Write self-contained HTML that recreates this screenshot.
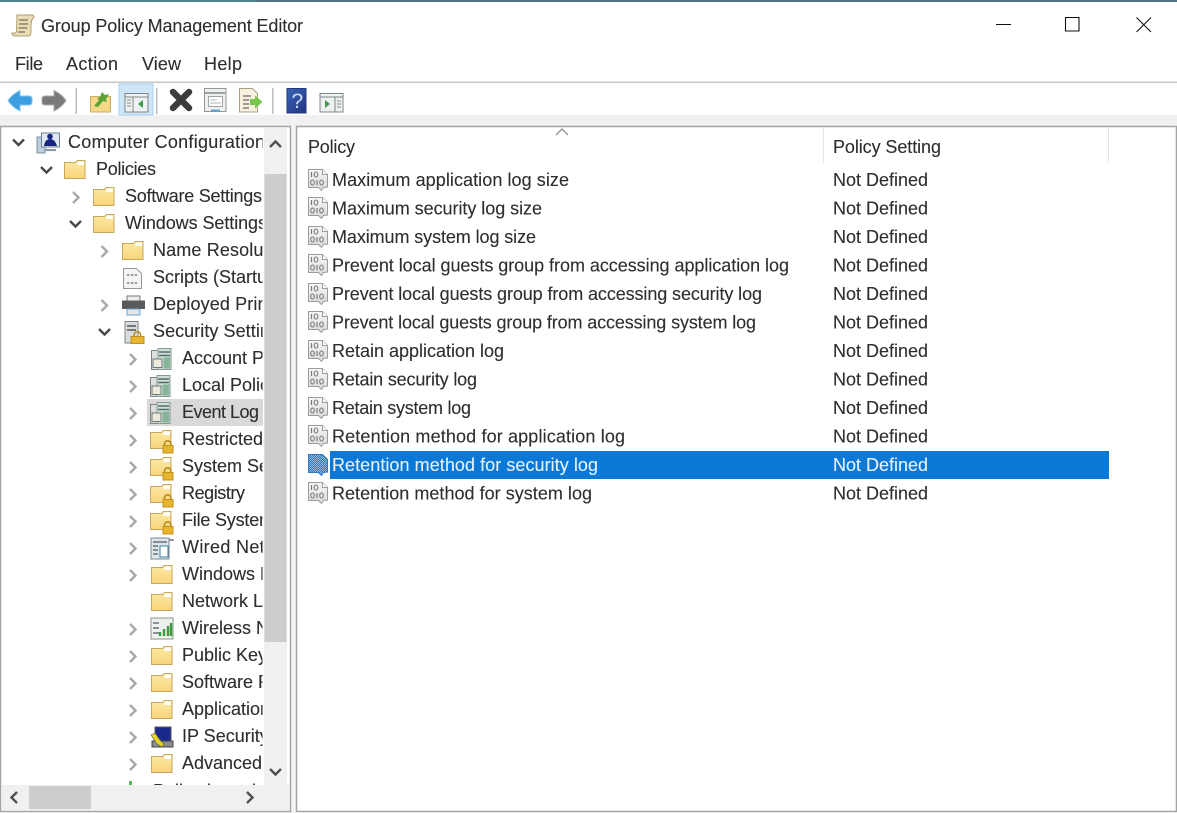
<!DOCTYPE html>
<html><head><meta charset="utf-8"><title>Group Policy Management Editor</title>
<style>html,body{margin:0;padding:0;background:#fff;overflow:hidden}svg{display:block;filter:blur(.3px)}
text{font-family:"Liberation Sans",Arial,sans-serif;font-size:18px;fill:#2e2e2e;stroke:#2e2e2e;stroke-width:.12px}
.g{fill:none;stroke:#a8a8a8;stroke-width:2.400}.d{fill:none;stroke:#484848;stroke-width:2.400}</style></head>
<body>
<svg width="1177" height="813" viewBox="0 0 1177 813" xmlns="http://www.w3.org/2000/svg">
<defs>
<linearGradient id="fg" x1="0" y1="0" x2="0" y2="1"><stop offset="0" stop-color="#fde9a6"/><stop offset="1" stop-color="#f8d47a"/></linearGradient>
<linearGradient id="pgf" x1="0" y1="0" x2="0" y2="1"><stop offset="0" stop-color="#f6f6f6"/><stop offset="1" stop-color="#d9d9d9"/></linearGradient>
<linearGradient id="hb" x1="0" y1="0" x2="1" y2="1"><stop offset="0" stop-color="#3d63b8"/><stop offset="1" stop-color="#20357f"/></linearGradient>
<pattern id="dth" width="2" height="2" patternUnits="userSpaceOnUse"><rect width="2" height="2" fill="#2f78c4"/><rect width="1" height="1" fill="#8fb9e2"/><rect x="1" y="1" width="1" height="1" fill="#8fb9e2"/></pattern>
<clipPath id="tc"><rect x="0" y="128" width="262.500" height="657"/></clipPath>
<g id="fd"><path d="M.5 18.500V2.500h11l2-2h7.500v18z" fill="url(#fg)" stroke="#c6a75e"/><path d="M13.500 1.500h6.500v3.500h-6.500z" fill="#fff"/></g>
<g id="fl"><use href="#fd"/><path d="M14.500 14a3.200 3.200 0 0 1 6.400 0v2h-6.400z" fill="none" stroke="#b98a1c" stroke-width="1.600"/><rect x="13" y="15.500" width="10" height="7.500" fill="#e8b52e" stroke="#c1911f"/></g>
<g id="sv"><rect x=".5" y="2.500" width="9" height="19" fill="#dcdfdf" stroke="#7a8484"/><rect x="7" y=".5" width="13" height="21" fill="#cfe0d8" stroke="#8a9790"/><path d="M8 4h11M8 7.500h11" stroke="#56686a" stroke-width="1.600"/><rect x="2" y="11" width="9" height="8.500" fill="#eeeadb" stroke="#6e7a7a"/><path d="M12.500 9.500h6.500v11h-6.500z" fill="#86b59a"/></g>
<g id="pg"><path d="M.5.5h14l5 5v12.500l-4 .5-2 3-3-3h-10z" fill="url(#pgf)" stroke="#9c9c9c"/><path d="M14.500.5v5h5" fill="#fff" stroke="#9c9c9c"/><path d="M3.500 3v5" stroke="#7c7c7c" stroke-width="1.200"/><ellipse cx="8" cy="5.500" rx="1.800" ry="2.500" fill="none" stroke="#7c7c7c" stroke-width="1.100"/><ellipse cx="4.500" cy="13.500" rx="1.800" ry="2.500" fill="none" stroke="#7c7c7c" stroke-width="1.100"/><path d="M9 11v5" stroke="#7c7c7c" stroke-width="1.200"/><ellipse cx="13.500" cy="13.500" rx="1.800" ry="2.500" fill="none" stroke="#7c7c7c" stroke-width="1.100"/></g>
</defs>

<!-- window chrome -->
<rect width="1177" height="813" fill="#fff"/>
<rect width="256" height="2" fill="#4f8194"/><rect x="256" width="921" height="2" fill="#4e7486"/>
<path d="M17 15h16l1 2q-3 3-3 8v7q0 4-3 4H15q-3 0-3-3 4 1 4.500-2z" fill="#eadcb4" stroke="#ae9d74"/><path d="M19 20h9M19 24h9M18.500 28h9M18 32h7" stroke="#77705c" stroke-width="1.300"/>
<text x="41" y="32" textLength="262">Group Policy Management Editor</text>
<path d="M996 24.500h15M1065.500 17.500h13.500v13.500h-13.500zM1136.500 17.500l14.500 14.500M1151 17.500l-14.500 14.500" fill="none" stroke="#111" stroke-width="1.100"/>
<text x="15" y="70" textLength="28">File</text><text x="66" y="70" textLength="52">Action</text><text x="142" y="70" textLength="39">View</text><text x="204" y="70" textLength="38">Help</text>
<rect y="81.500" width="1177" height="1.600" fill="#c9c9c9"/>
<rect y="115" width="1177" height="11" fill="#f0f0f0"/>

<!-- toolbar -->
<path d="M8 100.500q4-6 12-10v5.500h9q3 0 3 3v3q0 3-3 3h-9v6q-8-4-12-10.500z" fill="#3d9fe0" stroke="#7fc3ee"/>
<path d="M66 100.500q-4-6-12-10v5.500h-9q-3 0-3 3v3q0 3 3 3h9v6q8-4 12-10.500z" fill="#7a7a7a" stroke="#a8a8a8"/>
<rect x="75.500" y="88" width="1.500" height="26" fill="#bdbdbd"/>
<rect x="90.500" y="96.500" width="20" height="15.500" fill="#f6d987" stroke="#c9ad68"/><path d="M94 106l5-6-2-2 3-1 2-5 3 3 4-1-3 5 1 3-4-1-5 6z" fill="#5ea136"/>
<rect x="119" y="84" width="34" height="31" fill="#cfe6f8" stroke="#a8d0f0"/>
<rect x="125" y="93.500" width="23" height="18.500" fill="#eef2f2" stroke="#7d8787"/><path d="M125 97h23M133 97v15" stroke="#7d8787"/><path d="M143 100v8l-5-4z" fill="#3e9c4a"/><path d="M127 100h4M127 103h4M127 106h4" stroke="#888"/>
<rect x="156" y="88" width="1.500" height="26" fill="#bdbdbd"/>
<path d="M173 92l16 16M189 92l-16 16" stroke="#3c3c3c" stroke-width="6.500" stroke-linecap="round"/>
<rect x="204.500" y="88.500" width="21.500" height="23" fill="#f0f0f0" stroke="#8f9797"/><path d="M205 93h21" stroke="#9da5a5" stroke-width="2"/><rect x="208.500" y="96.500" width="14" height="10" fill="#fff" stroke="#9da5a5"/><path d="M210 100h7M210 103h11" stroke="#b0b6b6"/><path d="M211 110.500h9" stroke="#5ba6d8" stroke-width="2"/>
<path d="M239.500 88.500h13l5 5v18.500h-18z" fill="#f6f1de" stroke="#a99f84"/><path d="M243 96h8M243 100h6M243 104h6M243 108h6" stroke="#666" stroke-width="1.300"/><path d="M250 99h5v-3.500l7.500 6.500-7.500 6.500V105h-5z" fill="#79c44b"/>
<rect x="272" y="88" width="1.500" height="26" fill="#bdbdbd"/>
<rect x="287" y="88.500" width="19" height="24.500" fill="url(#hb)" stroke="#22367a"/><text x="291.500" y="108" style="font-size:21px;fill:#c9d8f2;stroke:#c9d8f2">?</text>
<rect x="320" y="93.500" width="23" height="18.500" fill="#eef2f2" stroke="#7d8787"/><path d="M320 97h23M335 97v15" stroke="#7d8787"/><path d="M325 100v8l5-4z" fill="#3e9c4a"/><path d="M337 101h4M337 104h4M337 107h4" stroke="#888"/>

<!-- left pane -->
<rect x="0.500" y="126.500" width="290" height="685" fill="#fff" stroke="#a4a4a4" stroke-width="1.500"/>
<rect x="291.500" y="115" width="4" height="698" fill="#f4f4f4"/>
<rect x="147" y="399" width="116" height="27" fill="#d9d9d9"/>

<!-- tree icons -->
<rect x="37" y="137" width="8" height="16" fill="#bcd0dd" stroke="#7b8f9c"/><rect x="41.500" y="133" width="18" height="14" fill="#dfe8f0" stroke="#70808c"/><circle cx="50" cy="136.500" r="2.800" fill="#16267e"/><path d="M44 146q1-7 6-7t7 7z" fill="#16267e"/><path d="M45 150h11" stroke="#8a9aa6" stroke-width="2.200"/>
<use href="#fd" x="64" y="160"/><use href="#fd" x="93" y="187"/><use href="#fd" x="93" y="214"/><use href="#fd" x="122" y="241"/>
<path d="M123.500 268.500h13l5 5v15h-18z" fill="#f4f4f4" stroke="#989898"/><path d="M127 275h10M127 283h10" stroke="#666" stroke-width="1.300" stroke-dasharray="2.500 1.500"/>
<rect x="127" y="296" width="13" height="5" fill="#eee" stroke="#777"/><rect x="122" y="300.500" width="23" height="8.500" fill="#5a5a5a"/><rect x="127" y="309" width="13" height="6" fill="#dfe6ec" stroke="#6aa0c8"/>
<rect x="125" y="321.500" width="13" height="21.500" fill="#d8dcde" stroke="#7b8386"/><path d="M127 326h9M127 330h9" stroke="#555" stroke-width="1.400"/><path d="M134 335a3.300 3.300 0 0 1 6.600 0v2h-6.600z" fill="none" stroke="#b98a1c" stroke-width="1.500"/><rect x="131" y="336.500" width="13" height="7" fill="#e8b52e" stroke="#c1911f"/>
<use href="#sv" x="151" y="348"/><use href="#sv" x="150" y="375"/><use href="#sv" x="150" y="402"/>
<use href="#fl" x="150" y="430"/><use href="#fl" x="150" y="457"/><use href="#fl" x="150" y="484"/><use href="#fl" x="150" y="511"/>
<rect x="151" y="538" width="18" height="21" fill="#dfe6ea" stroke="#7b8a94"/><path d="M153 542h14M153 546h5M153 550h5M153 554h5" stroke="#4d5d66" stroke-width="1.300"/><rect x="160" y="546" width="8" height="11" fill="#fff" stroke="#3d7f9e"/><path d="M169 540h5" stroke="#778" stroke-width="1.500"/>
<use href="#fd" x="151" y="565"/><use href="#fd" x="151" y="592"/>
<rect x="151" y="618" width="22" height="21" fill="#eef2ee" stroke="#8a948a"/><path d="M153 623h6M153 628h6M153 633h6" stroke="#556" stroke-width="1.300"/><path d="M160 636v-4M164 636v-7M168 636v-10M171 636v-13" stroke="#3b9a3b" stroke-width="2.400"/>
<use href="#fd" x="151" y="646"/><use href="#fd" x="151" y="673"/><use href="#fd" x="151" y="700"/>
<rect x="155" y="727" width="16" height="14" fill="#1a2a8a" stroke="#555"/><rect x="152" y="741" width="21" height="6" fill="#8d8d8d" stroke="#444"/><path d="M151 735l4-2 5 7 4 4-2 3-5-3z" fill="#e6d320" stroke="#555" stroke-width=".6"/>
<use href="#fd" x="151" y="754"/>
<rect x="129" y="781" width="3" height="4" fill="#5cb85c"/>

<!-- chevrons -->
<path class="d" d="M13 139.500l5.500 5.500 5.500-5.500M41 167l5.500 5.500 5.500-5.500M70 221l5.500 5.500 5.500-5.500M99 329l5.500 5.500 5.500-5.500"/>
<path class="g" d="M73 192l5.500 5.500-5.500 5.500M101.500 246l5.500 5.500-5.500 5.500M101.500 300l5.500 5.500-5.500 5.500M130 354l5.500 5.500-5.500 5.500M130 381l5.500 5.500-5.500 5.500M130 408l5.500 5.500-5.500 5.500M130 435l5.500 5.500-5.500 5.500M130 462l5.500 5.500-5.500 5.500M130 489l5.500 5.500-5.500 5.500M130 516l5.500 5.500-5.500 5.500M130 543l5.500 5.500-5.500 5.500M130 570l5.500 5.500-5.500 5.500M130 624l5.500 5.500-5.500 5.500M130 651l5.500 5.500-5.500 5.500M130 678l5.500 5.500-5.500 5.500M130 705l5.500 5.500-5.500 5.500M130 732l5.500 5.500-5.500 5.500M130 759l5.500 5.500-5.500 5.500"/>

<!-- tree text -->
<g clip-path="url(#tc)">
<text x="68" y="148" textLength="197">Computer Configuration</text>
<text x="96" y="175" textLength="60">Policies</text>
<text x="125" y="202" textLength="137">Software Settings</text>
<text x="125" y="229" textLength="142">Windows Settings</text>
<text x="153" y="256" textLength="140">Name Resolution</text>
<text x="153" y="283" textLength="130">Scripts (Startup)</text>
<text x="153" y="310" textLength="145">Deployed Printers</text>
<text x="153" y="337" textLength="136">Security Settings</text>
<text x="182" y="364">Account Policies</text>
<text x="182" y="391">Local Policies</text>
<text x="182" y="418" textLength="77">Event Log</text>
<text x="182" y="445">Restricted Groups</text>
<text x="182" y="472" textLength="134">System Services</text>
<text x="182" y="499" textLength="63">Registry</text>
<text x="182" y="526" textLength="92">File System</text>
<text x="182" y="553" textLength="122">Wired Network</text>
<text x="182" y="580">Windows Firewall</text>
<text x="182" y="607">Network List</text>
<text x="182" y="634">Wireless Network</text>
<text x="182" y="661">Public Key Policies</text>
<text x="182" y="688">Software Restriction</text>
<text x="182" y="715">Application Control</text>
<text x="182" y="742">IP Security Policies</text>
<text x="182" y="769">Advanced Audit</text>
<text x="153" y="797">Policy-based QoS</text>
</g>

<!-- scrollbars -->
<rect x="264" y="128" width="23" height="657" fill="#f0f0f0"/>
<rect x="264.500" y="174" width="22" height="468" fill="#cdcdcd"/>
<path d="M270 147l5.500-5.500 5.500 5.500M270 769l5.500 5.500 5.500-5.500" fill="none" stroke="#505050" stroke-width="2.400"/>
<rect x="2" y="785" width="287" height="25" fill="#f0f0f0"/>
<rect x="29" y="786" width="62" height="23" fill="#cdcdcd"/>
<path d="M17 792l-5.500 5.500 5.500 5.500M247 792l5.500 5.500-5.500 5.500" fill="none" stroke="#505050" stroke-width="2.400"/>

<!-- right pane -->
<rect x="296.500" y="126.500" width="880" height="685" fill="#fff" stroke="#a4a4a4" stroke-width="1.500"/>
<path d="M556 135l6-6 6 6" fill="none" stroke="#9a9a9a" stroke-width="1.500"/>
<path d="M823.500 128v35M1108.500 128v35" stroke="#e6e6e6"/>
<text x="308" y="153" textLength="47">Policy</text>
<text x="833" y="153" textLength="108">Policy Setting</text>

<rect x="330" y="451" width="779" height="28" fill="#0a78d7"/>

<use href="#pg" x="308" y="169"/><use href="#pg" x="308" y="197"/><use href="#pg" x="308" y="226"/><use href="#pg" x="308" y="254"/><use href="#pg" x="308" y="283"/><use href="#pg" x="308" y="311"/><use href="#pg" x="308" y="340"/><use href="#pg" x="308" y="368"/><use href="#pg" x="308" y="397"/><use href="#pg" x="308" y="425"/><use href="#pg" x="308" y="482"/>
<path d="M308.500 454.500h14l5 5v12.500l-4 .5-2 3-3-3h-10z" fill="url(#dth)" stroke="#2f79c4"/>

<text x="332" y="186" textLength="237">Maximum application log size</text>
<text x="332" y="214.500" textLength="210">Maximum security log size</text>
<text x="332" y="243" textLength="204">Maximum system log size</text>
<text x="332" y="271.500" textLength="457">Prevent local guests group from accessing application log</text>
<text x="332" y="300" textLength="430">Prevent local guests group from accessing security log</text>
<text x="332" y="328.500" textLength="424">Prevent local guests group from accessing system log</text>
<text x="332" y="357" textLength="172">Retain application log</text>
<text x="332" y="385.500" textLength="145">Retain security log</text>
<text x="332" y="414" textLength="139">Retain system log</text>
<text x="332" y="442.500" textLength="293">Retention method for application log</text>
<text x="332" y="471" textLength="266" style="fill:#e4f1fc;stroke:#e4f1fc">Retention method for security log</text>
<text x="332" y="499.500" textLength="260">Retention method for system log</text>

<text x="833" y="186" textLength="95">Not Defined</text>
<text x="833" y="214.500" textLength="95">Not Defined</text>
<text x="833" y="243" textLength="95">Not Defined</text>
<text x="833" y="271.500" textLength="95">Not Defined</text>
<text x="833" y="300" textLength="95">Not Defined</text>
<text x="833" y="328.500" textLength="95">Not Defined</text>
<text x="833" y="357" textLength="95">Not Defined</text>
<text x="833" y="385.500" textLength="95">Not Defined</text>
<text x="833" y="414" textLength="95">Not Defined</text>
<text x="833" y="442.500" textLength="95">Not Defined</text>
<text x="833" y="471" textLength="95" style="fill:#e4f1fc;stroke:#e4f1fc">Not Defined</text>
<text x="833" y="499.500" textLength="95">Not Defined</text>
</svg>
</body></html>
